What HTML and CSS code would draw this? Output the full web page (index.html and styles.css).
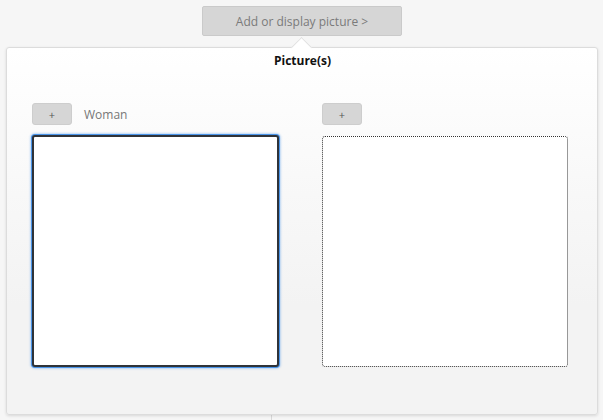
FILE: index.html
```html
<!DOCTYPE html>
<html lang="en">
<head>
    <meta charset="UTF-8">
    <title>Picture(s)</title>
    <link rel="stylesheet" href="styles.css">
</head>
<body>
    <div class="toolbar">
        <button class="display-button">Add or display picture &gt;</button>
    </div>
    <div class="popover">
        <div class="popover-title">Picture(s)</div>
        <div class="pictures">
            <div class="slot">
                <div class="slot-head">
                    <button class="add-button">+</button>
                    <span class="slot-label">Woman</span>
                </div>
                <div class="picture-box focused"></div>
            </div>
            <div class="slot">
                <div class="slot-head">
                    <button class="add-button">+</button>
                </div>
                <div class="picture-box empty"></div>
            </div>
        </div>
    </div>
    <div class="behind"></div>
</body>
</html>
```

FILE: styles.css
```css
body {
    margin: 0;
    background-color: #f6f6f6;
    font-family: 'Open Sans', 'Noto Sans', sans-serif;
    color: #333;
    height: 420px;
    overflow: hidden;
}
.toolbar {
    display: flex;
    justify-content: center;
    padding-top: 6px;
}
.display-button {
    width: 200px;
    height: 30px;
    margin-left: 1px;
    background-color: #d6d6d6;
    border: 1px solid #cacaca;
    border-radius: 2px;
    color: #7a7a7a;
    font-family: inherit;
    font-size: 12px;
    padding: 0;
}
.popover {
    position: relative;
    margin: 11px 5px 0 6px;
    height: 366px;
    border: 1px solid #dcdcdc;
    border-radius: 3px;
    background: linear-gradient(#ffffff 0%, #f8f8f8 40%, #f3f3f3 70%, #f3f3f3 100%);
    box-shadow: 0 1px 3px rgba(0, 0, 0, 0.12);
}
/* little arrow pointing at the button */
.popover::before {
    content: '';
    position: absolute;
    top: -8.5px;
    left: 287px;
    width: 15px;
    height: 15px;
    background: #fff;
    border-top: 1px solid #e0e0e0;
    border-left: 1px solid #e0e0e0;
    box-sizing: border-box;
    transform: rotate(45deg);
}
.popover-title {
    position: relative;
    text-align: center;
    font-weight: bold;
    font-size: 12px;
    color: #111;
    padding-top: 4px;
    margin-left: 1px;
}
.pictures {
    display: grid;
    grid-template-columns: 247px 246px;
    column-gap: 43px;
    padding: 34px 0 0 25px;
}
.slot-head {
    display: flex;
    align-items: center;
    gap: 12px;
    height: 22px;
}
.add-button {
    width: 40px;
    height: 22px;
    background-color: #d6d6d6;
    border: 1px solid #cdcdcd;
    border-radius: 3px;
    color: #555;
    font-size: 11px;
    font-family: inherit;
    padding: 0;
}
.slot-label {
    font-size: 12px;
    color: #777;
}
.picture-box {
    margin-top: 11px;
    height: 231px;
    background-color: #fff;
    border-radius: 3px;
    box-sizing: border-box;
}
.picture-box.focused {
    margin-top: 10px;
    height: 232px;
    border: 2px solid #2f3338;
    box-shadow: 0 0 0 1px #4a94e8, 0 0 2px 2px rgba(74, 148, 232, 0.35);
}
.picture-box.empty {
    border: 1px dotted #333;
}
.behind {
    width: 1px;
    height: 10px;
    margin-left: 271px;
    background: #d8d8d8;
}
```
